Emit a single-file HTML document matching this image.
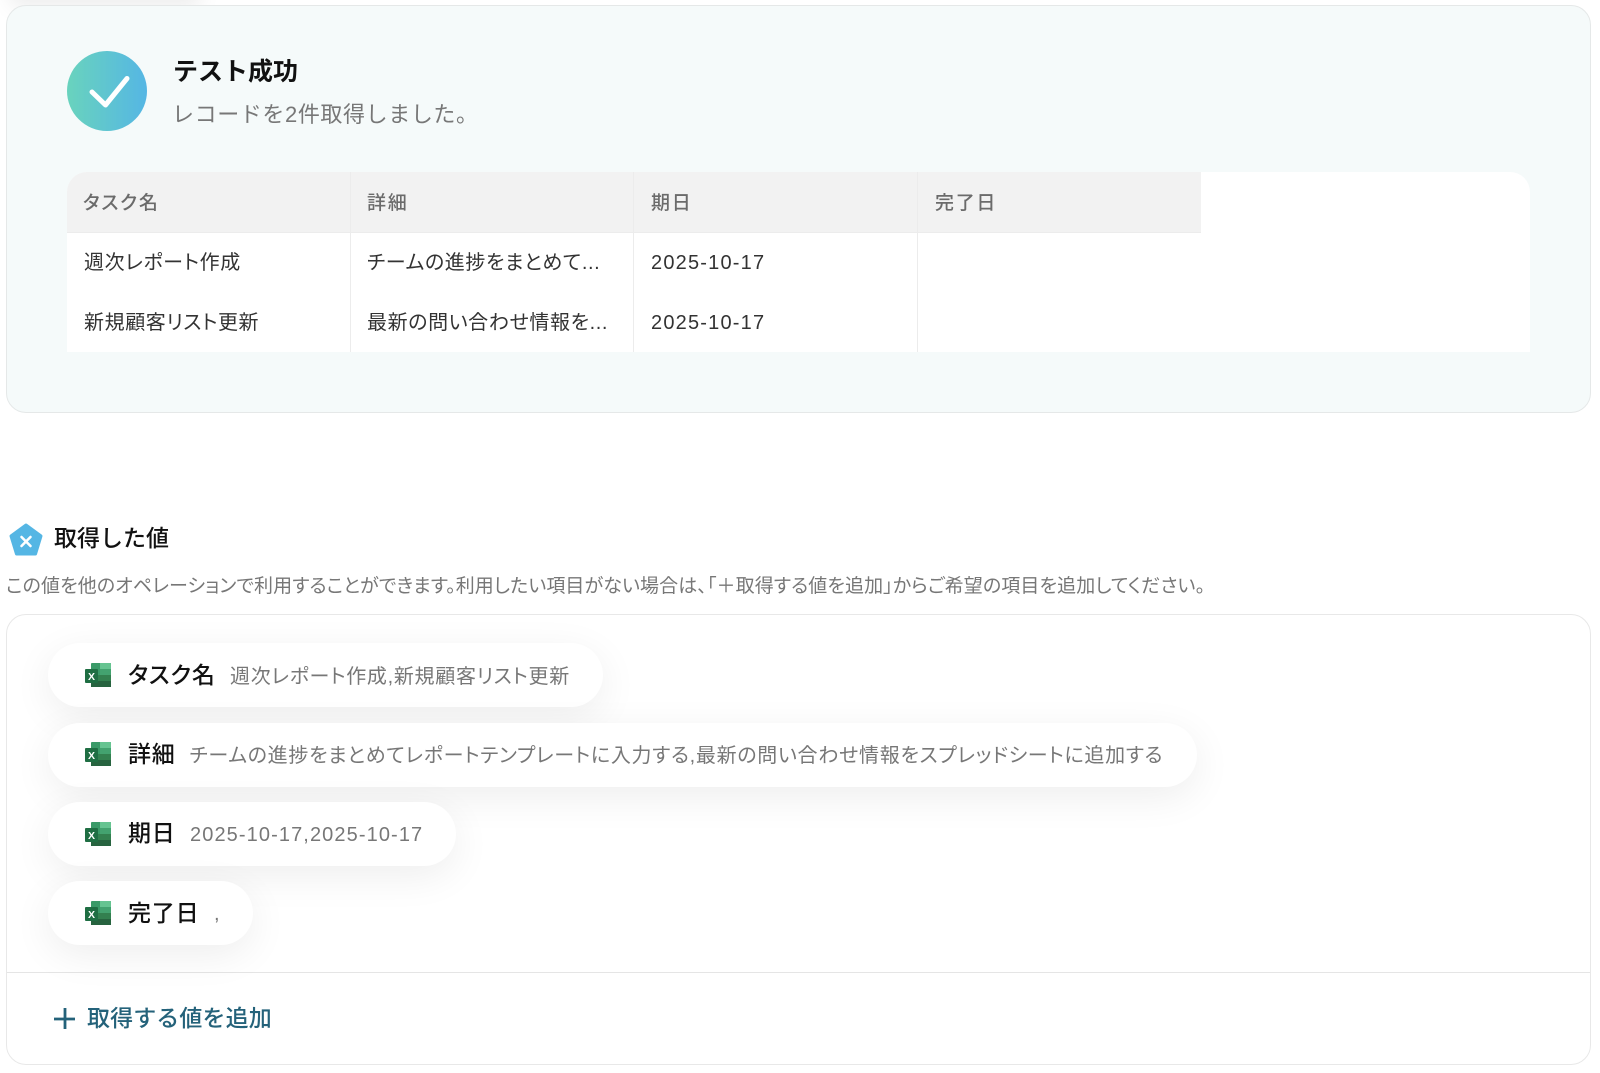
<!DOCTYPE html>
<html lang="ja">
<head>
<meta charset="utf-8">
<title>テスト成功</title>
<style>
html,body{margin:0;padding:0;background:#fff;width:1600px;height:1073px;overflow:hidden}
body{position:relative;font-family:"Liberation Sans","Noto Sans CJK JP",sans-serif;color:#1a1a1a}
.a{position:absolute;white-space:nowrap}
.card{left:6px;top:5px;width:1585px;height:408px;box-sizing:border-box;background:#f5fafa;border:1px solid #e5e8e8;border-radius:20px}
.tbl{left:67px;top:172px;width:1463px;height:180px;background:#fff;border-radius:20px 20px 0 0;overflow:hidden}
.hd{left:0;top:0;width:1134px;height:61px;background:#f2f2f2;border-bottom:1px solid #ececec;box-sizing:border-box}
.v{top:0;width:1px;height:181px;background:#ececec}
.th{font-size:19px;line-height:28px;color:#6b6b6b;font-weight:500;font-feature-settings:"palt";letter-spacing:1.700px}
.td{font-size:20px;line-height:28px;color:#333;letter-spacing:.6px;font-feature-settings:"palt"}
.pill{left:48px;height:64px;background:#fff;border-radius:32px;box-shadow:0 10px 40px rgba(0,0,0,.07)}
.pl{font-size:23px;line-height:32px;font-weight:500;color:#111;letter-spacing:.8px;font-feature-settings:"palt"}
.pv{font-size:20px;line-height:30px;color:#777;letter-spacing:.7px;font-feature-settings:"palt"}
svg{position:absolute;display:block}
</style>
</head>
<body>
<div class="a" style="left:10px;top:-30px;width:190px;height:30px;box-shadow:0 6px 22px rgba(0,0,0,.08)"></div>
<div class="a card"></div>

<svg style="left:67px;top:51px" width="80" height="80" viewBox="0 0 80 80">
<defs><linearGradient id="g" x1="0" y1="0" x2="1" y2="0"><stop offset="0" stop-color="#69d3bd"/><stop offset="1" stop-color="#55b6e4"/></linearGradient></defs>
<circle cx="40" cy="40" r="40" fill="url(#g)"/>
<path d="M25 41L38.500 54L60 27.500" fill="none" stroke="#fff" stroke-width="5" stroke-linecap="round" stroke-linejoin="round"/>
</svg>
<div class="a" style="left:173px;top:54px;font-size:25px;line-height:36px;font-weight:700;color:#111">テスト成功</div>
<div class="a" style="left:172px;top:98px;font-size:22px;line-height:34px;color:#777;letter-spacing:.6px">レコードを2件取得しました。</div>

<div class="a tbl">
<div class="a hd"></div>
<div class="a v" style="left:283px"></div>
<div class="a v" style="left:566px"></div>
<div class="a v" style="left:850px"></div>
<div class="a th" style="left:16px;top:18px">タスク名</div>
<div class="a th" style="left:300px;top:18px">詳細</div>
<div class="a th" style="left:584px;top:18px">期日</div>
<div class="a th" style="left:868px;top:18px">完了日</div>
<div class="a td" style="left:17px;top:77px">週次レポート作成</div>
<div class="a td" style="left:300px;top:77px">チームの進捗をまとめて...</div>
<div class="a td" style="left:584px;top:77px;letter-spacing:1.200px">2025-10-17</div>
<div class="a td" style="left:17px;top:137px">新規顧客リスト更新</div>
<div class="a td" style="left:300px;top:137px">最新の問い合わせ情報を...</div>
<div class="a td" style="left:584px;top:137px;letter-spacing:1.200px">2025-10-17</div>
</div>

<svg style="left:9px;top:523px" width="34" height="34" viewBox="0 0 34 34">
<path d="M17 2L32 13L26.500 31H7.500L2 13Z" fill="#55b6e4" stroke="#55b6e4" stroke-width="3" stroke-linejoin="round"/>
<path d="M12.500 14L21.500 23M21.500 14L12.500 23" stroke="#fff" stroke-width="2.600" stroke-linecap="round"/>
</svg>
<div class="a" style="left:54px;top:521px;font-size:23px;line-height:34px;font-weight:500;color:#111">取得した値</div>
<div class="a" style="left:6px;top:572.500px;font-size:19px;line-height:28px;color:#777;letter-spacing:.1px;font-feature-settings:'palt'">この値を他のオペレーションで利用することができます。利用したい項目がない場合は、「＋取得する値を追加」からご希望の項目を追加してください。</div>

<div class="a" style="left:6px;top:614px;width:1585px;height:451px;box-sizing:border-box;background:#fff;border:1px solid #e8e8e8;border-radius:20px"></div>
<div class="a" style="left:7px;top:972px;width:1583px;height:1px;background:#e5e5e5"></div>

<div class="a pill" style="top:643px;width:555px"></div>
<div class="a pill" style="top:723px;width:1149px"></div>
<div class="a pill" style="top:802px;width:408px"></div>
<div class="a pill" style="top:881px;width:205px"></div>

<svg style="left:85px;top:663px" width="26" height="24" viewBox="0 0 26 24"><rect x="6" width="20" height="24" rx="1" fill="#3a9a68"/><rect x="15" width="11" height="6" fill="#66c491"/><rect x="15" y="6" width="11" height="6" fill="#43a26f"/><rect x="6" y="12" width="20" height="6" fill="#33804f"/><rect x="6" y="18" width="20" height="6" fill="#27633f"/><rect y="6" width="13" height="14" rx="1" fill="#1f6e43"/><text x="6.500" y="17" text-anchor="middle" font-size="10.500" font-weight="700" fill="#fff" font-family="Liberation Sans">X</text></svg>
<svg style="left:85px;top:742px" width="26" height="24" viewBox="0 0 26 24"><rect x="6" width="20" height="24" rx="1" fill="#3a9a68"/><rect x="15" width="11" height="6" fill="#66c491"/><rect x="15" y="6" width="11" height="6" fill="#43a26f"/><rect x="6" y="12" width="20" height="6" fill="#33804f"/><rect x="6" y="18" width="20" height="6" fill="#27633f"/><rect y="6" width="13" height="14" rx="1" fill="#1f6e43"/><text x="6.500" y="17" text-anchor="middle" font-size="10.500" font-weight="700" fill="#fff" font-family="Liberation Sans">X</text></svg>
<svg style="left:85px;top:822px" width="26" height="24" viewBox="0 0 26 24"><rect x="6" width="20" height="24" rx="1" fill="#3a9a68"/><rect x="15" width="11" height="6" fill="#66c491"/><rect x="15" y="6" width="11" height="6" fill="#43a26f"/><rect x="6" y="12" width="20" height="6" fill="#33804f"/><rect x="6" y="18" width="20" height="6" fill="#27633f"/><rect y="6" width="13" height="14" rx="1" fill="#1f6e43"/><text x="6.500" y="17" text-anchor="middle" font-size="10.500" font-weight="700" fill="#fff" font-family="Liberation Sans">X</text></svg>
<svg style="left:85px;top:901px" width="26" height="24" viewBox="0 0 26 24"><rect x="6" width="20" height="24" rx="1" fill="#3a9a68"/><rect x="15" width="11" height="6" fill="#66c491"/><rect x="15" y="6" width="11" height="6" fill="#43a26f"/><rect x="6" y="12" width="20" height="6" fill="#33804f"/><rect x="6" y="18" width="20" height="6" fill="#27633f"/><rect y="6" width="13" height="14" rx="1" fill="#1f6e43"/><text x="6.500" y="17" text-anchor="middle" font-size="10.500" font-weight="700" fill="#fff" font-family="Liberation Sans">X</text></svg>

<div class="a pl" style="left:128px;top:659px">タスク名</div>
<div class="a pv" style="left:230px;top:662px">週次レポート作成,新規顧客リスト更新</div>
<div class="a pl" style="left:128px;top:738px">詳細</div>
<div class="a pv" style="left:189.500px;top:741px">チームの進捗をまとめてレポートテンプレートに入力する,最新の問い合わせ情報をスプレッドシートに追加する</div>
<div class="a pl" style="left:128px;top:817px">期日</div>
<div class="a pv" style="left:190px;top:820px;letter-spacing:1.100px">2025-10-17,2025-10-17</div>
<div class="a pl" style="left:128px;top:897px">完了日</div>
<div class="a pv" style="left:214px;top:899px">,</div>

<svg style="left:53px;top:1008px" width="23" height="22" viewBox="0 0 23 22"><path d="M12 0V21M1 11H22" stroke="#24627a" stroke-width="2.800" fill="none"/></svg>
<div class="a" style="left:87px;top:1001px;font-size:23px;line-height:34px;font-weight:500;color:#24627a;letter-spacing:.1px">取得する値を追加</div>
</body>
</html>
